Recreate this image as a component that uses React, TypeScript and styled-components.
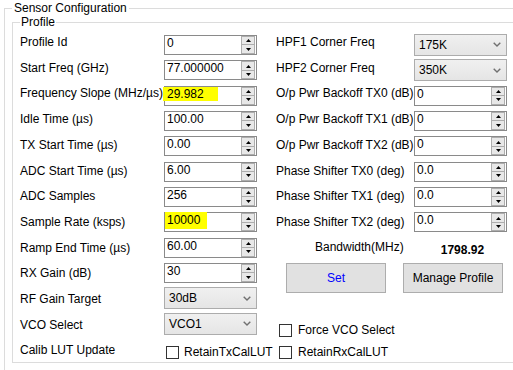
import React from 'react';
import styled, { createGlobalStyle } from 'styled-components';

const GlobalStyle = createGlobalStyle`
  html, body { margin: 0; padding: 0; background: #ffffff; }
  body {
    font-family: "Liberation Sans", Arial, sans-serif;
    font-size: 12px;
    color: #000;
    width: 513px;
    height: 370px;
    overflow: hidden;
  }
`;

const Page = styled.div`
  padding: 1px 0 0 4px;
`;

const GroupBox = styled.fieldset<{ $inner?: boolean }>`
  margin: 0;
  min-width: 0;
  border: 1px solid #dcdcdc;
  border-right: none;
  ${(p) =>
    p.$inner
      ? 'padding: 3.33px 0 0 7px;'
      : 'border-bottom: none; padding: 0 0 12px 7px;'}
`;

const Legend = styled.legend<{ $pad: number }>`
  padding: 0 ${(p) => p.$pad}px;
  line-height: 14px;
  font-size: 12px;
`;

const Columns = styled.div`
  display: grid;
  grid-template-columns: 237px 231px;
  column-gap: 19px;
`;

const Panel = styled.div<{ $cols: string }>`
  display: grid;
  grid-template-columns: ${(p) => p.$cols};
  grid-template-rows: repeat(13, 25.33px);
  align-items: center;
`;

const Label = styled.div<{ $row: number }>`
  grid-column: 1;
  grid-row: ${(p) => p.$row + 1};
  align-self: start;
  padding-top: ${(p) => 2.8 + p.$row * 0.35}px;
  line-height: 15px;
  white-space: nowrap;
`;

const Cell = styled.div<{ $row: number; $top?: boolean }>`
  grid-column: 2;
  grid-row: ${(p) => p.$row + 1};
  ${(p) => (p.$top ? 'align-self: start;' : '')}
`;

const TextBox = styled.div`
  box-sizing: border-box;
  height: 20px;
  border: 1px solid #8a8a8a;
  background: #fff;
  display: flex;
`;

const TextValue = styled.div`
  flex: 1;
  padding-left: 2px;
  line-height: 15px;
  white-space: nowrap;
`;

const Highlight = styled.span<{ $left: number; $width: number; $height: number; $top: number }>`
  display: inline-block;
  vertical-align: top;
  background: #ffff00;
  margin-left: ${(p) => p.$left}px;
  padding-left: ${(p) => -p.$left}px;
  width: ${(p) => p.$width}px;
  height: ${(p) => p.$height}px;
  margin-top: ${(p) => p.$top}px;
  padding-top: ${(p) => -p.$top}px;
  box-sizing: border-box;
`;

const Spin = styled.div`
  width: 14px;
  margin-right: 1px;
  display: flex;
  flex-direction: column;
`;

const SpinHalf = styled.div<{ $down?: boolean }>`
  flex: 1;
  box-sizing: border-box;
  border: 1px solid #adadad;
  ${(p) => (p.$down ? 'border-top: none;' : '')}
  background: #e8e8e8;
  display: flex;
  align-items: center;
  justify-content: center;
`;

const ComboBox = styled.div`
  box-sizing: border-box;
  height: 22px;
  border: 1px solid #acacac;
  background: linear-gradient(#f0f0f0, #e5e5e5);
  display: flex;
  align-items: center;
  justify-content: space-between;
  padding: 0 5px 0 4px;
  line-height: 20px;
`;

const CheckRow = styled.div<{ $gap: number; $pad: number; $top: number }>`
  display: flex;
  align-items: center;
  gap: ${(p) => p.$gap}px;
  padding-left: ${(p) => p.$pad}px;
  margin-top: ${(p) => p.$top}px;
  line-height: 15px;
  white-space: nowrap;
`;

const Box = styled.span`
  box-sizing: border-box;
  width: 13px;
  height: 13px;
  border: 1px solid #333;
  background: #fff;
  flex: none;
`;

const WideCell = styled.div<{ $row: number; $span?: number }>`
  grid-column: 1 / -1;
  grid-row: ${(p) => p.$row + 1} / span ${(p) => p.$span ?? 1};
  align-self: start;
`;

const BandwidthRow = styled.div`
  display: flex;
  padding-left: 39px;
  gap: 37px;
  line-height: 15px;
`;

const BwLabel = styled.span`
  padding-top: 5.2px;
`;

const BwValue = styled.span`
  padding-top: 7.6px;
  font-weight: bold;
`;

const ButtonRow = styled.div`
  display: flex;
  gap: 17px;
  padding-left: 10px;
  margin-top: 2.67px;
`;

const Button = styled.div<{ $blue?: boolean }>`
  box-sizing: border-box;
  width: 100px;
  height: 30px;
  border: 1px solid #adadad;
  background: #e1e1e1;
  display: flex;
  align-items: center;
  justify-content: center;
  color: ${(p) => (p.$blue ? '#0000ff' : '#000')};
`;

const Arrow = ({ down }: { down?: boolean }) => (
  <svg width="5" height="3" viewBox="0 0 5 3">
    <polygon points={down ? '0,0 5,0 2.5,3' : '0,3 5,3 2.5,0'} fill="#000" />
  </svg>
);

const Chevron = () => (
  <svg width="8" height="5" viewBox="0 0 8 5">
    <polyline points="0.7,0.7 4,4 7.3,0.7" fill="none" stroke="#707070" strokeWidth="1.4" />
  </svg>
);

type HL = { left: number; width: number; height: number; top: number };

const SpinBox = ({ value, hl }: { value: string; hl?: HL }) => (
  <TextBox>
    <TextValue>
      {hl ? (
        <Highlight $left={hl.left} $width={hl.width} $height={hl.height} $top={hl.top}>
          {value}
        </Highlight>
      ) : (
        value
      )}
    </TextValue>
    <Spin>
      <SpinHalf>
        <Arrow />
      </SpinHalf>
      <SpinHalf $down>
        <Arrow down />
      </SpinHalf>
    </Spin>
  </TextBox>
);

const Combo = ({ value }: { value: string }) => (
  <ComboBox>
    <span>{value}</span>
    <Chevron />
  </ComboBox>
);

type Row = { label: string; kind: 'spin' | 'combo'; value: string; hl?: HL };

const leftRows: Row[] = [
  { label: 'Profile Id', kind: 'spin', value: '0' },
  { label: 'Start Freq (GHz)', kind: 'spin', value: '77.000000' },
  {
    label: 'Frequency Slope (MHz/µs)',
    kind: 'spin',
    value: '29.982',
    hl: { left: -4, width: 55, height: 14, top: 0 },
  },
  { label: 'Idle Time (µs)', kind: 'spin', value: '100.00' },
  { label: 'TX Start Time (µs)', kind: 'spin', value: '0.00' },
  { label: 'ADC Start Time (µs)', kind: 'spin', value: '6.00' },
  { label: 'ADC Samples', kind: 'spin', value: '256' },
  {
    label: 'Sample Rate (ksps)',
    kind: 'spin',
    value: '10000',
    hl: { left: -2, width: 42, height: 17, top: -1 },
  },
  { label: 'Ramp End Time (µs)', kind: 'spin', value: '60.00' },
  { label: 'RX Gain (dB)', kind: 'spin', value: '30' },
  { label: 'RF Gain Target', kind: 'combo', value: '30dB' },
  { label: 'VCO Select', kind: 'combo', value: 'VCO1' },
];

const rightRows: Row[] = [
  { label: 'HPF1 Corner Freq', kind: 'combo', value: '175K' },
  { label: 'HPF2 Corner Freq', kind: 'combo', value: '350K' },
  { label: 'O/p Pwr Backoff TX0 (dB)', kind: 'spin', value: '0' },
  { label: 'O/p Pwr Backoff TX1 (dB)', kind: 'spin', value: '0' },
  { label: 'O/p Pwr Backoff TX2 (dB)', kind: 'spin', value: '0' },
  { label: 'Phase Shifter TX0 (deg)', kind: 'spin', value: '0.0' },
  { label: 'Phase Shifter TX1 (deg)', kind: 'spin', value: '0.0' },
  { label: 'Phase Shifter TX2 (deg)', kind: 'spin', value: '0.0' },
];

const renderRows = (rows: Row[]) =>
  rows.map((r, i) => (
    <React.Fragment key={r.label}>
      <Label $row={i}>{r.label}</Label>
      <Cell $row={i}>
        {r.kind === 'spin' ? <SpinBox value={r.value} hl={r.hl} /> : <Combo value={r.value} />}
      </Cell>
    </React.Fragment>
  ));

export default function App() {
  return (
    <>
      <GlobalStyle />
      <Page>
        <GroupBox>
          <Legend $pad={2}>Sensor Configuration</Legend>
          <GroupBox $inner>
            <Legend $pad={1}>Profile</Legend>
            <Columns>
              <Panel $cols="144px 93px">
                {renderRows(leftRows)}
                <Label $row={12}>Calib LUT Update</Label>
                <Cell $row={12} $top>
                  <CheckRow $gap={5} $pad={2} $top={8.67}>
                    <Box />
                    <span>RetainTxCalLUT</span>
                  </CheckRow>
                </Cell>
              </Panel>
              <Panel $cols="138px 93px">
                {renderRows(rightRows)}
                <WideCell $row={8}>
                  <BandwidthRow>
                    <BwLabel>Bandwidth(MHz)</BwLabel>
                    <BwValue>1798.92</BwValue>
                  </BandwidthRow>
                </WideCell>
                <WideCell $row={9} $span={2}>
                  <ButtonRow>
                    <Button $blue>Set</Button>
                    <Button>Manage Profile</Button>
                  </ButtonRow>
                </WideCell>
                <WideCell $row={11}>
                  <CheckRow $gap={6} $pad={3} $top={12}>
                    <Box />
                    <span>Force VCO Select</span>
                  </CheckRow>
                </WideCell>
                <WideCell $row={12}>
                  <CheckRow $gap={6} $pad={3} $top={8.67}>
                    <Box />
                    <span>RetainRxCalLUT</span>
                  </CheckRow>
                </WideCell>
              </Panel>
            </Columns>
          </GroupBox>
        </GroupBox>
      </Page>
    </>
  );
}
